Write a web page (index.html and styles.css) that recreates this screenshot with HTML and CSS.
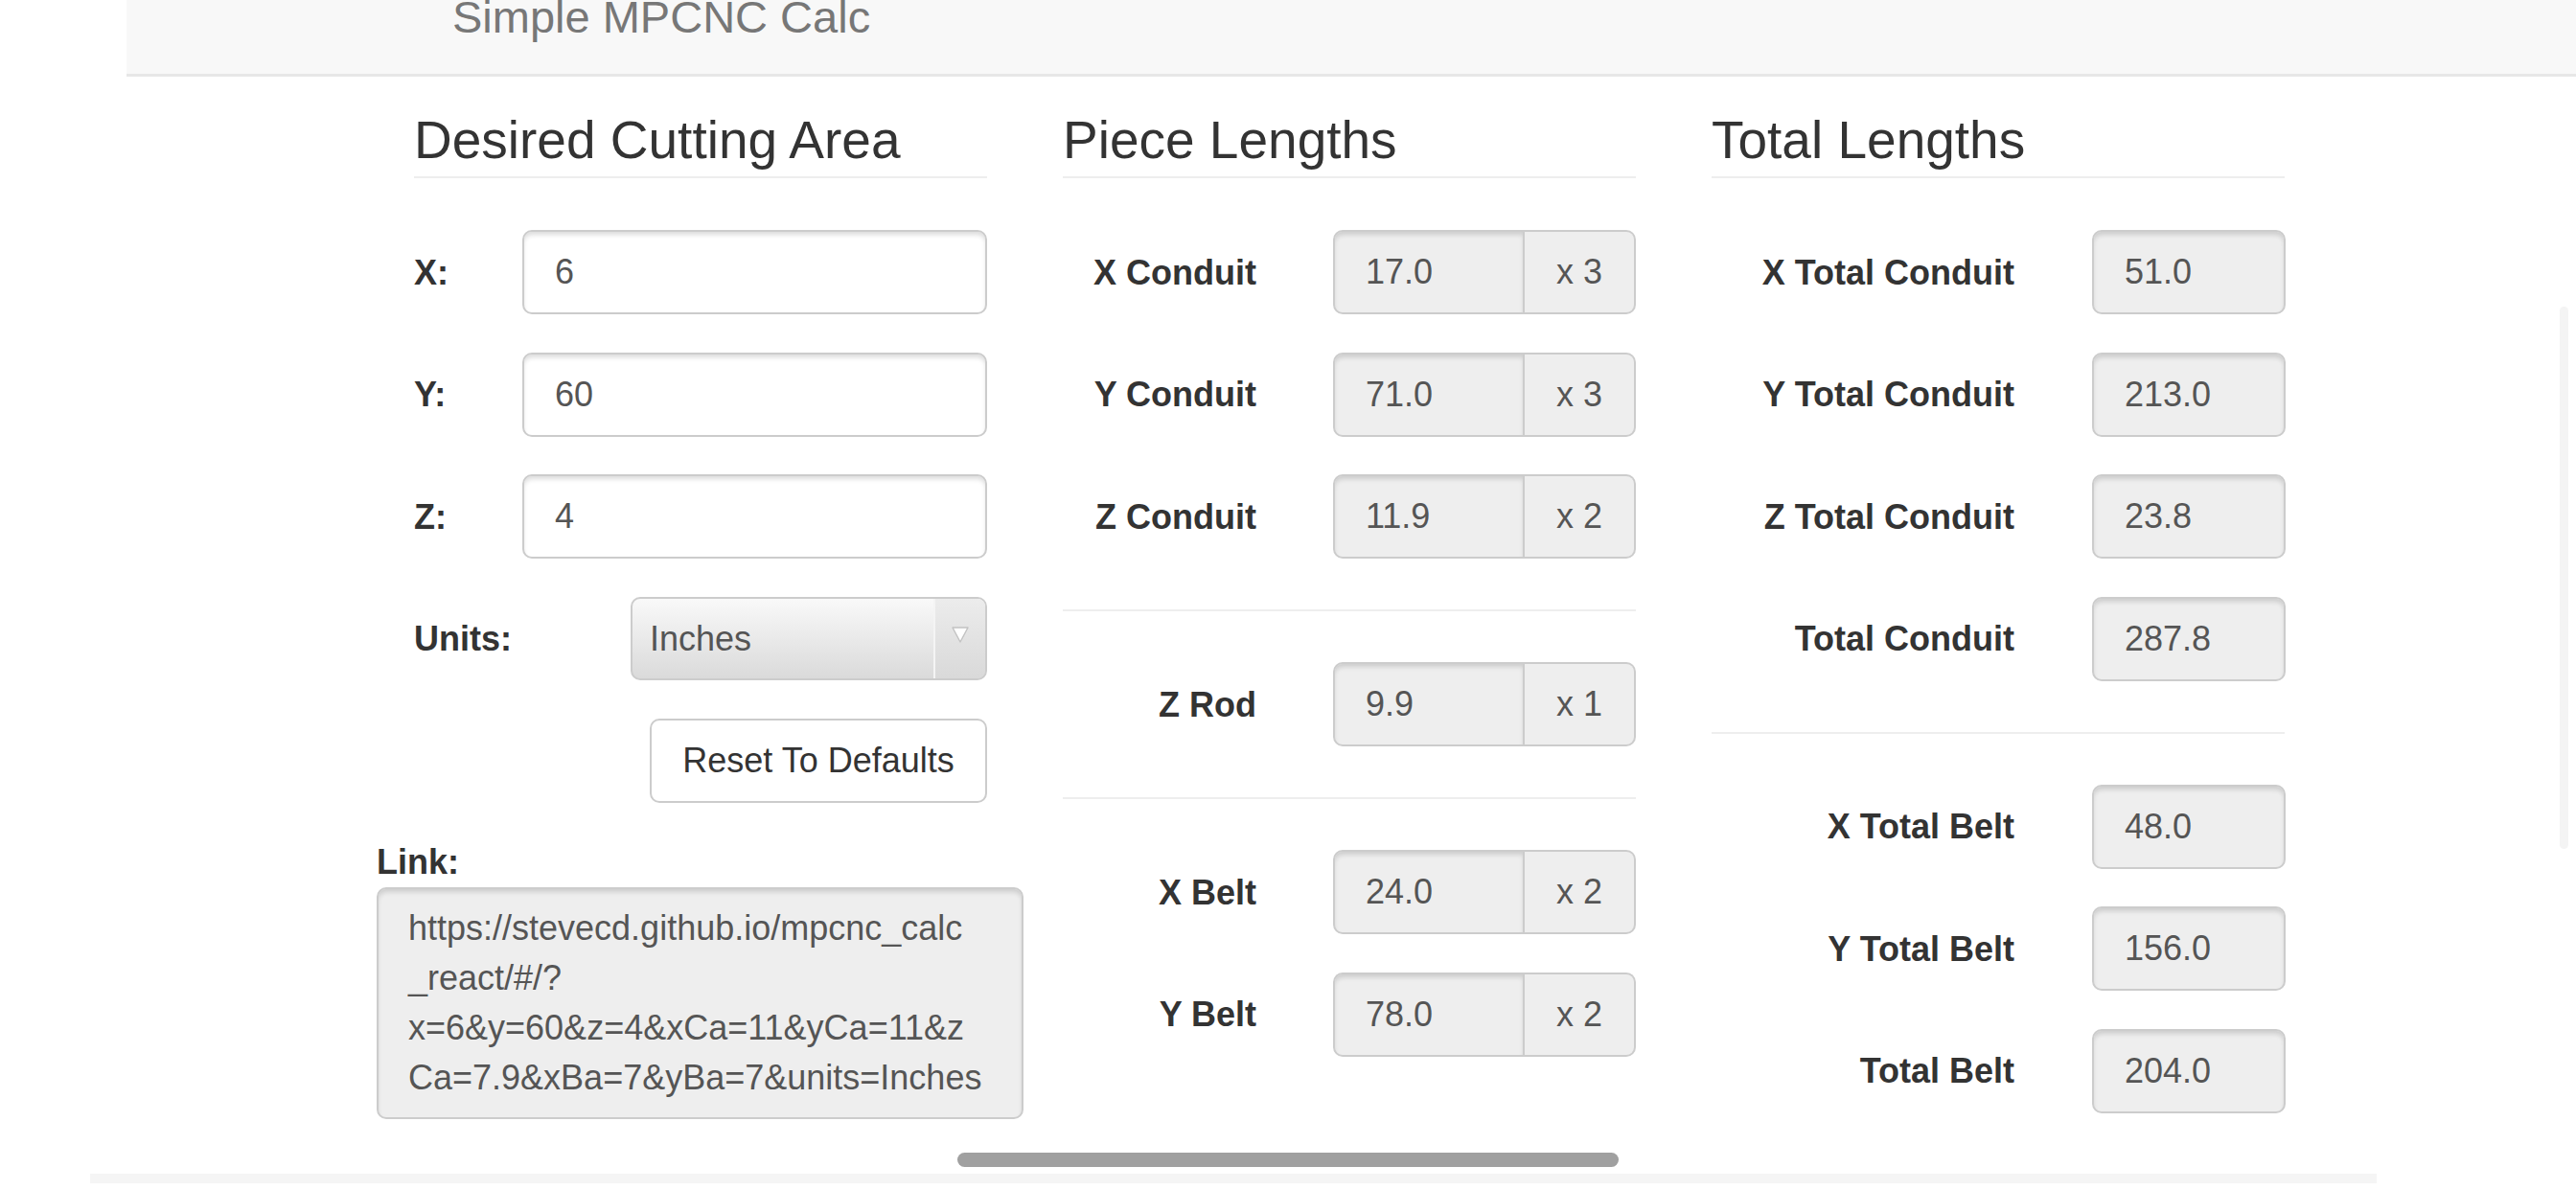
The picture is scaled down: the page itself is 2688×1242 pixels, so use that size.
FILE: index.html
```html
<!DOCTYPE html>
<html lang="en">
<head>
  <meta charset="UTF-8" />
  <meta name="viewport" content="width=device-width, initial-scale=1.0"/>
  <title>Simple MPCNC Calc</title>
  <link rel="stylesheet" href="styles.css">
</head>
<body>

  <header class="navbar">
    <span class="brand">Simple MPCNC Calc</span>
  </header>

  <div class="calc">
    <section class="panel">
      <h3>Desired Cutting Area</h3>

      <div class="field field-axis">
        <label for="x">X:</label>
        <input type="text" id="x" value="6" />
      </div>
      <div class="field field-axis">
        <label for="y">Y:</label>
        <input type="text" id="y" value="60" />
      </div>
      <div class="field field-axis">
        <label for="z">Z:</label>
        <input type="text" id="z" value="4" />
      </div>
      <div class="field field-units">
        <label for="units">Units:</label>
        <div class="select" id="units">
          <span class="select-value">Inches</span>
          <span class="select-arrow">
            <svg width="18" height="18" viewBox="0 0 18 18"><path d="M1 2 H17 L9 17 Z" fill="#fff" stroke="#c2c2c2" stroke-width="1.4" stroke-linejoin="round"/></svg>
          </span>
        </div>
      </div>
      <div class="actions">
        <button type="button">Reset To Defaults</button>
      </div>

      <label class="link-label">Link:</label>
      <div class="link-box">https://stevecd.github.io/mpcnc_calc<br>_react/#/?<br>x=6&amp;y=60&amp;z=4&amp;xCa=11&amp;yCa=11&amp;z<br>Ca=7.9&amp;xBa=7&amp;yBa=7&amp;units=Inches</div>
    </section>

    <section class="panel">
      <h3>Piece Lengths</h3>

      <div class="field field-piece">
        <label>X Conduit</label>
        <div class="input-group"><input type="text" value="17.0" readonly /><span class="addon">x 3</span></div>
      </div>
      <div class="field field-piece">
        <label>Y Conduit</label>
        <div class="input-group"><input type="text" value="71.0" readonly /><span class="addon">x 3</span></div>
      </div>
      <div class="field field-piece">
        <label>Z Conduit</label>
        <div class="input-group"><input type="text" value="11.9" readonly /><span class="addon">x 2</span></div>
      </div>

      <hr>

      <div class="field field-piece">
        <label>Z Rod</label>
        <div class="input-group"><input type="text" value="9.9" readonly /><span class="addon">x 1</span></div>
      </div>

      <hr>

      <div class="field field-piece">
        <label>X Belt</label>
        <div class="input-group"><input type="text" value="24.0" readonly /><span class="addon">x 2</span></div>
      </div>
      <div class="field field-piece">
        <label>Y Belt</label>
        <div class="input-group"><input type="text" value="78.0" readonly /><span class="addon">x 2</span></div>
      </div>
    </section>

    <section class="panel">
      <h3>Total Lengths</h3>

      <div class="field field-total">
        <label>X Total Conduit</label>
        <input type="text" value="51.0" readonly />
      </div>
      <div class="field field-total">
        <label>Y Total Conduit</label>
        <input type="text" value="213.0" readonly />
      </div>
      <div class="field field-total">
        <label>Z Total Conduit</label>
        <input type="text" value="23.8" readonly />
      </div>
      <div class="field field-total">
        <label>Total Conduit</label>
        <input type="text" value="287.8" readonly />
      </div>

      <hr>

      <div class="field field-total">
        <label>X Total Belt</label>
        <input type="text" value="48.0" readonly />
      </div>
      <div class="field field-total">
        <label>Y Total Belt</label>
        <input type="text" value="156.0" readonly />
      </div>
      <div class="field field-total">
        <label>Total Belt</label>
        <input type="text" value="204.0" readonly />
      </div>
    </section>
  </div>

  <div class="page-end"></div>

  <div class="scroll-x"></div>
  <div class="scroll-y"></div>

</body>
</html>
```

FILE: styles.css
```css
body {
  margin: 0;
  font-family: "Liberation Sans", Arial, sans-serif;
  font-size: 36px;
  color: #333;
  background-color: #fff;
}

.navbar {
  margin-left: 132px;
  height: 77px;
  padding-left: 340px;
  background-color: #f8f8f8;
  border-bottom: 3px solid #e7e7e7;
}

.brand {
  display: block;
  font-size: 47px;
  line-height: 35px;
  color: #777;
}

.calc {
  display: grid;
  grid-template-columns: repeat(3, 598px);
  column-gap: 79px;
  align-items: start;
  padding-left: 432px;
}

.panel {
  display: flex;
  flex-direction: column;
}

.panel h3 {
  margin: 37px 0 54px;
  padding-bottom: 9px;
  border-bottom: 2px solid #eee;
  font-size: 55px;
  font-weight: normal;
  line-height: 58px;
}

.panel hr {
  width: 100%;
  height: 0;
  margin: 53px 0;
  border: 0;
  border-top: 2px solid #eee;
}

label {
  font-weight: bold;
  line-height: 43px;
}

.field {
  display: grid;
  align-items: center;
  height: 88px;
}

.field + .field,
.field + .actions {
  margin-top: 39.5px;
}

.field-axis {
  grid-template-columns: 113px 1fr;
}

.field-units {
  grid-template-columns: 226px 1fr;
}

.field-piece {
  grid-template-columns: 202px 316px;
  column-gap: 80px;
}

.field-total {
  grid-template-columns: 316px 202px;
  column-gap: 81px;
}

.field-piece label,
.field-total label {
  text-align: right;
}

input {
  box-sizing: border-box;
  width: 100%;
  height: 88px;
  margin: 0;
  padding: 0 32px;
  font-family: inherit;
  font-size: 36px;
  color: #555;
  background-color: #fff;
  border: 2px solid #ccc;
  border-radius: 10px;
  box-shadow: inset 0 4px 5px -1px rgba(0, 0, 0, 0.14);
  outline: none;
}

input[readonly] {
  background-color: #eee;
}

.input-group {
  display: flex;
  height: 88px;
}

.input-group input {
  flex: 1;
  border-radius: 10px 0 0 10px;
}

.addon {
  box-sizing: border-box;
  width: 116px;
  display: flex;
  align-items: center;
  justify-content: center;
  color: #555;
  background-color: #eee;
  border: 2px solid #ccc;
  border-left: 0;
  border-radius: 0 10px 10px 0;
}

.select {
  box-sizing: border-box;
  height: 87px;
  display: flex;
  color: #555;
  background: linear-gradient(#f9f9f9, #dadada);
  border: 2px solid #ccc;
  border-radius: 10px;
}

.select-value {
  flex: 1;
  display: flex;
  align-items: center;
  padding-left: 18px;
}

.select-arrow {
  width: 52px;
  display: flex;
  justify-content: center;
  padding-top: 28px;
  background: linear-gradient(#ececec, #d9d9d9);
  border-left: 2px solid #f4f4f4;
  border-radius: 0 8px 8px 0;
}

.actions {
  display: flex;
  justify-content: flex-end;
}

.actions button {
  width: 352px;
  height: 88px;
  font-family: inherit;
  font-size: 36px;
  color: #333;
  background-color: #fff;
  border: 2px solid #ccc;
  border-radius: 10px;
}

.link-label {
  margin: 39.5px 0 0 -39px;
}

.link-box {
  box-sizing: border-box;
  width: 675px;
  margin: 5px 0 0 -39px;
  padding: 15px 31px;
  line-height: 52px;
  white-space: nowrap;
  color: #555;
  background-color: #eee;
  border: 2px solid #ccc;
  border-radius: 10px;
  box-shadow: inset 0 4px 5px -1px rgba(0, 0, 0, 0.14);
}

.page-end {
  width: 2386px;
  height: 10px;
  margin: 57px 0 0 94px;
  background-color: #f5f5f5;
}

.scroll-x {
  position: absolute;
  top: 1203px;
  left: 999px;
  width: 690px;
  height: 15px;
  border-radius: 8px;
  background-color: #a0a0a0;
}

.scroll-y {
  position: absolute;
  top: 320px;
  left: 2671px;
  width: 9px;
  height: 566px;
  border-radius: 5px;
  background-color: #f4f4f4;
}
```
